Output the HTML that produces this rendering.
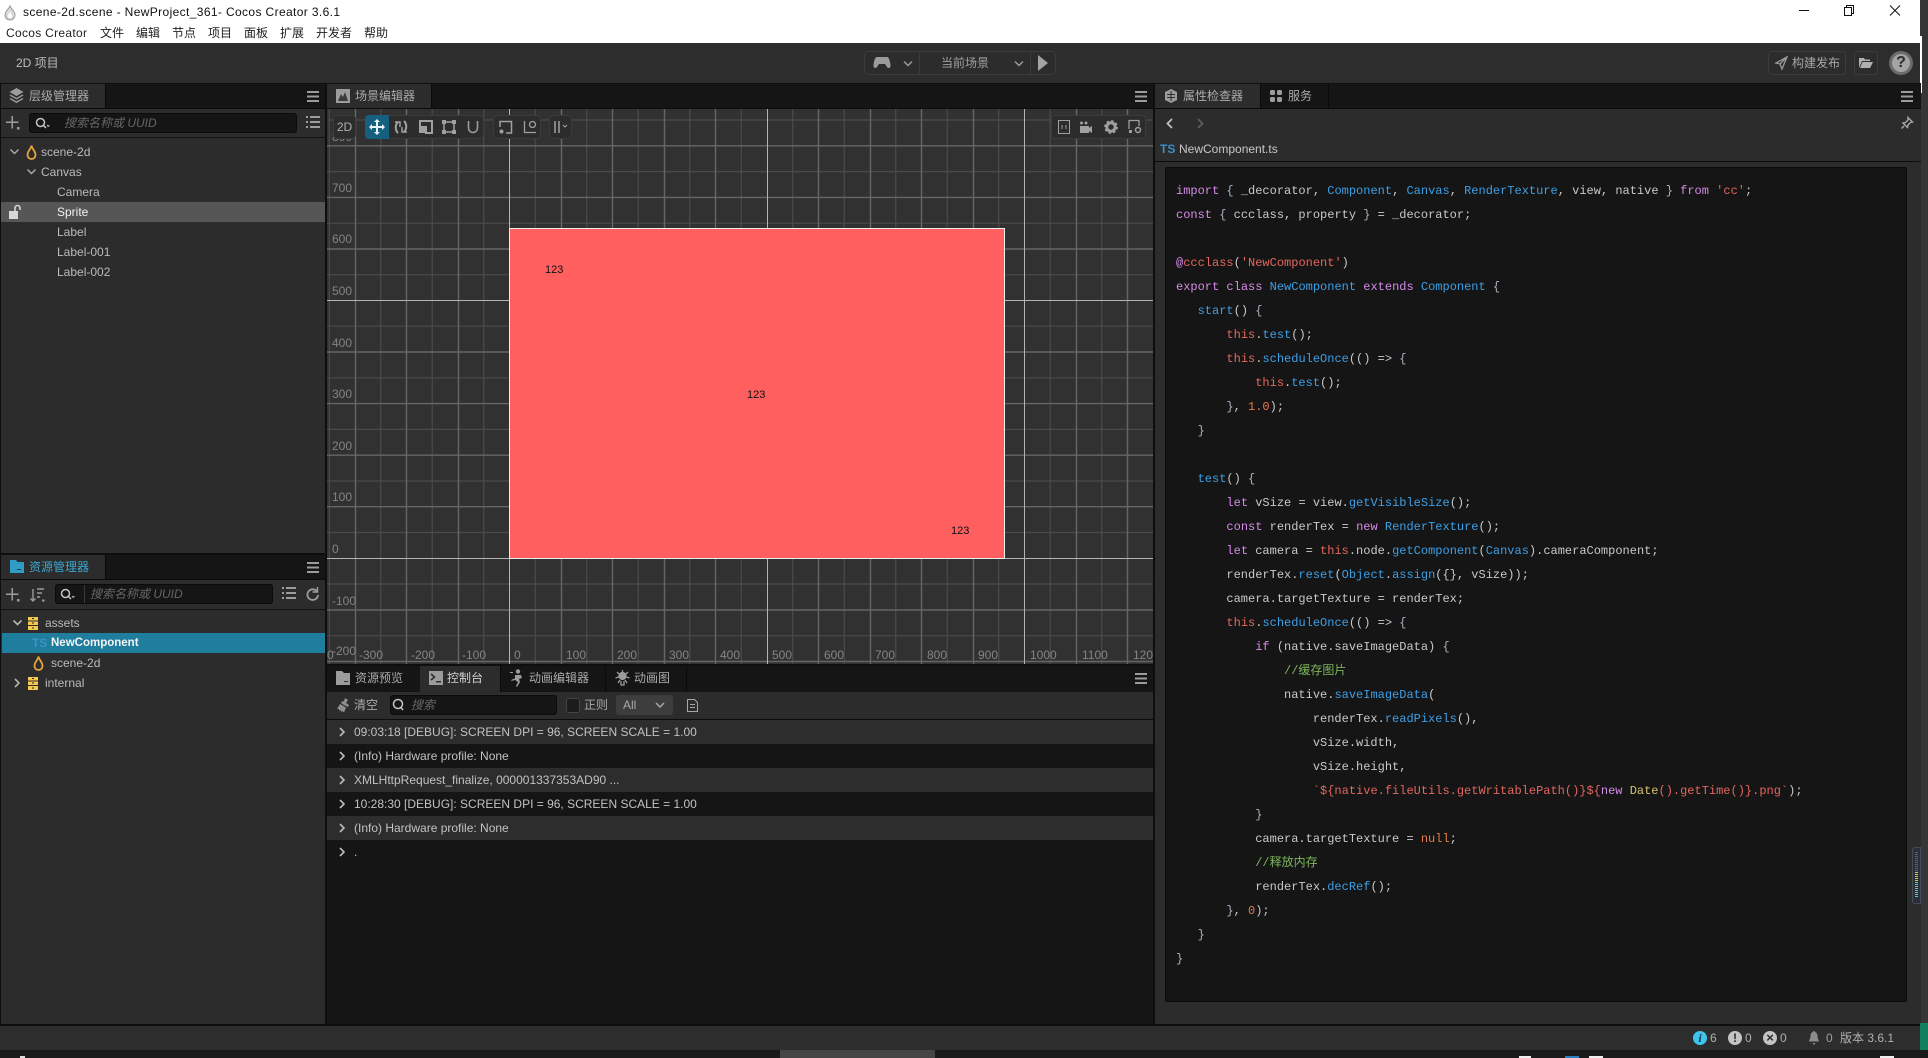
<!DOCTYPE html>
<html lang="zh"><head><meta charset="utf-8"><title>scene-2d.scene - NewProject_361- Cocos Creator 3.6.1</title>
<style>
html,body{margin:0;padding:0;width:1928px;height:1058px;overflow:hidden;background:#363636}
body{position:relative;font:12px/20px "Liberation Sans","Noto Sans CJK SC",sans-serif;color:#b4b4b4}
.a,.t{position:absolute;white-space:pre}
.t{height:20px;line-height:20px}
.tab{font-size:12px;color:#ababab}
svg{position:absolute;overflow:visible}
.bx{position:absolute;box-sizing:border-box;background:#2c2c2c;border:1px solid #3b3b3b;border-radius:4px}
.in{position:absolute;box-sizing:border-box;background:#151515;border:1px solid #0b0b0b;border-radius:3px}
.ph{font-style:italic;color:#666}
.ro{position:absolute;left:327px;width:826px;height:24px}
.ro .t{left:27px;top:2px;color:#c2c2c2}
.ro svg{left:12px;top:7px}
.ruler{color:#848484}
#code{position:absolute;left:1176px;top:179px;margin:0;font:12px/24px "Liberation Mono","Noto Sans CJK SC",monospace;color:#c9c9c9;white-space:pre}
#code i{font-style:normal}
.k{color:#d58be8}.b{color:#3d9fe6}.r{color:#e4665f}.o{color:#e67a48}.g{color:#7cb75a}.y{color:#d6c36b}.p{color:#a9b4c0}
</style></head><body>

<!-- title bar -->
<div class="a" style="left:0;top:0;width:1920px;height:43px;background:#fff"></div>
<svg style="left:3px;top:5px" width="14" height="16" viewBox="0 0 14 16"><path d="M7 1C8 4 12 6 12 10a5 5 0 0 1-10 0C2 6 6 4 7 1z" fill="#d8d8d8" stroke="#9a9a9a"/><path d="M7 5C7 8 9 9 9 11a2 2 0 0 1-4 0c0-2 2-3 2-6z" fill="#fff"/></svg>
<div class="t" style="left:23px;top:2px;color:#111;letter-spacing:.37px">scene-2d.scene - NewProject_361- Cocos Creator 3.6.1</div>
<div class="t" style="left:6px;top:23px;color:#222;letter-spacing:.3px">Cocos Creator</div>
<div class="t" style="left:100px;top:23px;color:#222">文件</div>
<div class="t" style="left:136px;top:23px;color:#222">编辑</div>
<div class="t" style="left:172px;top:23px;color:#222">节点</div>
<div class="t" style="left:208px;top:23px;color:#222">项目</div>
<div class="t" style="left:244px;top:23px;color:#222">面板</div>
<div class="t" style="left:280px;top:23px;color:#222">扩展</div>
<div class="t" style="left:316px;top:23px;color:#222">开发者</div>
<div class="t" style="left:364px;top:23px;color:#222">帮助</div>
<svg style="left:1795px;top:2px" width="120" height="18" viewBox="1795 2 120 18" fill="none" stroke="#111"><path d="M1799 10.500h10"/><path d="M1844.500 7.500h7v8h-7zM1846.500 7.500v-2h7v8h-2"/><path d="M1890 5.500l10 10M1900 5.500l-10 10"/></svg>

<!-- top toolbar -->
<div class="a" style="left:0;top:43px;width:1921px;height:40px;background:#2d2d2d"></div>
<div class="a" style="left:1920px;top:36px;width:2px;height:57px;background:#fff"></div>
<div class="t" style="left:16px;top:53px;color:#bdbdbd">2D 项目</div>
<div class="bx" style="left:864px;top:51px;width:192px;height:24px"></div>
<div class="a" style="left:919px;top:52px;width:1px;height:22px;background:#3b3b3b"></div>
<div class="a" style="left:1030px;top:52px;width:1px;height:22px;background:#3b3b3b"></div>
<svg style="left:873px;top:56px" width="18" height="14" viewBox="0 0 18 14"><path d="M4 1h10c2 0 3 4 3.500 8 .3 3-2 4-3.500 2l-2-3H6l-2 3C2.500 13 .2 12 .5 9 1 5 2 1 4 1z" fill="#9a9a9a"/></svg>
<svg style="left:903px;top:60px" width="120" height="8" viewBox="0 0 120 8" fill="none" stroke="#9a9a9a" stroke-width="1.500"><path d="M1 1.500l4 4 4-4M112 1.500l4 4 4-4"/></svg>
<div class="t" style="left:941px;top:53px;color:#a0a0a0">当前场景</div>
<svg style="left:1037px;top:55px" width="12" height="16" viewBox="0 0 12 16"><path d="M1 0l10 8-10 8z" fill="#a3a3a3"/></svg>
<div class="bx" style="left:1768px;top:51px;width:78px;height:24px"></div>
<svg style="left:1775px;top:56px" width="13" height="14" viewBox="0 0 13 14" fill="none" stroke="#9a9a9a" stroke-width="1.300"><path d="M12 1L1 7l4 1 2 5zM12 1L5 8"/></svg>
<div class="t" style="left:1792px;top:53px;color:#a6a6a6">构建发布</div>
<div class="bx" style="left:1854px;top:51px;width:24px;height:24px"></div>
<svg style="left:1859px;top:57px" width="14" height="12" viewBox="0 0 14 12"><path d="M0 1h5l1 1.500h5V4H3L0 11zM3.500 5H14l-3 6H1z" fill="#b0b0b0"/></svg>
<div class="a" style="left:1889px;top:51px;width:24px;height:24px;border-radius:50%;background:#6b6b6b"></div>
<div class="a" style="left:1892px;top:54px;width:18px;height:18px;border-radius:50%;background:#a4a4a4;color:#2b2b2b;font:bold 16px/18px 'Liberation Sans';text-align:center">?</div>

<!-- dark seams -->
<div class="a" style="left:0;top:83px;width:1921px;height:943px;background:#0e0e0e"></div>

<!-- hierarchy panel -->
<div class="a" style="left:1px;top:84px;width:324px;height:469px;background:#2c2c2c"></div>
<div class="a" style="left:1px;top:84px;width:324px;height:24px;background:#151515"></div>
<div class="a" style="left:1px;top:84px;width:104px;height:24px;background:#2c2c2c"></div>
<div class="a" style="left:105px;top:84px;width:1px;height:24px;background:#0a0a0a"></div>
<div class="a" style="left:1px;top:108px;width:324px;height:1px;background:#0a0a0a"></div>
<svg style="left:9px;top:88px" width="15" height="15" viewBox="0 0 15 15" fill="#9c9c9c"><path d="M7.500 0l7 4-7 4-7-4z"/><path d="M1.500 6.500l6 3.400 6-3.400 1 1-7 4-7-4zM1.500 10l6 3.400 6-3.400 1 1-7 4-7-4z"/></svg>
<div class="t tab" style="left:29px;top:86px">层级管理器</div>
<svg style="left:307px;top:91px" width="12" height="11" viewBox="0 0 12 11" fill="#9c9c9c"><path d="M0 0h12v2H0zM0 4.500h12v2H0zM0 9h12v2H0z"/></svg>
<svg style="left:6px;top:116px" width="14" height="14" viewBox="0 0 14 14" fill="#9c9c9c"><path d="M5.500 0h1.500v5.500h5.500V7H7v5.500H5.500V7H0V5.500h5.500zM11 11h2.500v2.500H11z"/></svg>
<div class="in" style="left:29px;top:113px;width:268px;height:20px"></div>
<svg style="left:35px;top:117px" width="15" height="13" viewBox="0 0 15 13" fill="none" stroke="#c4c4c4" stroke-width="1.500"><circle cx="5.500" cy="5.500" r="4"/><path d="M8.500 8.500L11 11"/><path d="M12 8l1.200 1.500L14.400 8" stroke-width="1"/></svg>
<div class="t ph" style="left:64px;top:113px">搜索名称或 UUID</div>
<svg style="left:306px;top:116px" width="14" height="13" viewBox="0 0 14 13" fill="#9c9c9c"><path d="M0 0h2v2H0zM4 0h10v2H4zM0 5h2v2H0zM4 5h10v2H4zM0 10h2v2H0zM4 10h10v2H4z"/></svg>
<div class="a" style="left:1px;top:137px;width:324px;height:1px;background:#111"></div>
<svg style="left:10px;top:149px" width="25" height="7" viewBox="0 0 25 7" fill="none" stroke="#a8a8a8" stroke-width="1.500"><path d="M0.500 0.500l4 4 4-4"/></svg>
<svg style="left:26px;top:144px" width="11" height="17" viewBox="0 0 11 17" fill="none" stroke="#e6a23c" stroke-width="1.800"><path d="M5.500 1.500C6 5 9.500 7 9.500 11a4 4 0 0 1-8 0c0-4 3.500-6 4-9.500z"/></svg>
<div class="t" style="left:41px;top:142px;color:#bbb">scene-2d</div>
<svg style="left:27px;top:169px" width="9" height="7" viewBox="0 0 9 7" fill="none" stroke="#a8a8a8" stroke-width="1.500"><path d="M0.500 0.500l4 4 4-4"/></svg>
<div class="t" style="left:41px;top:162px;color:#bbb">Canvas</div>
<div class="t" style="left:57px;top:182px;color:#bbb">Camera</div>
<div class="a" style="left:1px;top:202px;width:324px;height:20px;background:#565656"></div>
<svg style="left:8px;top:205px" width="14" height="14" viewBox="0 0 14 14"><path d="M1 6h9v8H1z" fill="#d8d8d8"/><path d="M7 6V3a2.500 2.500 0 0 1 5 0v2" fill="none" stroke="#d8d8d8" stroke-width="1.500"/></svg>
<div class="t" style="left:57px;top:202px;color:#f2f2f2">Sprite</div>
<div class="t" style="left:57px;top:222px;color:#bbb">Label</div>
<div class="t" style="left:57px;top:242px;color:#bbb">Label-001</div>
<div class="t" style="left:57px;top:262px;color:#bbb">Label-002</div>

<!-- scene editor -->
<div class="a" style="left:327px;top:84px;width:826px;height:24px;background:#151515"></div>
<div class="a" style="left:327px;top:84px;width:104px;height:24px;background:#2c2c2c"></div>
<div class="a" style="left:431px;top:84px;width:1px;height:24px;background:#0a0a0a"></div>
<svg style="left:336px;top:89px" width="14" height="14" viewBox="0 0 14 14"><path d="M0 0h14v14H0z" fill="#9c9c9c"/><path d="M2 12l3-7 2 3 2-5 3 9z" fill="#3b3b3b"/></svg>
<div class="t tab" style="left:355px;top:86px">场景编辑器</div>
<svg style="left:1135px;top:91px" width="12" height="11" viewBox="0 0 12 11" fill="#9c9c9c"><path d="M0 0h12v2H0zM0 4.500h12v2H0zM0 9h12v2H0z"/></svg>

<div class="a" style="left:327px;top:109px;width:826px;height:555px;background:#313131;overflow:hidden">
<svg style="left:0;top:0" width="826" height="555" viewBox="327 109 826 555" fill="none">
<path stroke="#4b4b4b" stroke-width="1.200" d="M329.250 109V664M380.750 109V664M432.250 109V664M483.750 109V664M535.250 109V664M586.750 109V664M638.250 109V664M689.750 109V664M741.250 109V664M792.750 109V664M844.250 109V664M895.750 109V664M947.250 109V664M998.750 109V664M1050.250 109V664M1101.750 109V664M327 120H1153M327 171.600H1153M327 223.200H1153M327 274.700H1153M327 326.200H1153M327 377.800H1153M327 429.400H1153M327 481H1153M327 532.500H1153M327 584H1153M327 635.800H1153"/>
<path stroke="#666" stroke-width="1.400" d="M355.500 109V664M406.500 109V664M458.500 109V664M561.500 109V664M612.500 109V664M664.500 109V664M715.500 109V664M818.500 109V664M870.500 109V664M921.500 109V664M973.500 109V664M1076.500 109V664M1127.500 109V664M327 145.800H1153M327 197.400H1153M327 249H1153M327 352H1153M327 403.600H1153M327 455.200H1153M327 506.700H1153M327 610H1153M327 661.500H1153"/>
<path stroke="#b4b4b4" d="M509.500 109V664M767.500 109V664M1024.500 109V664M327 300.500H1153M327 558.500H1153"/>
</svg>
<div class="a" style="left:182px;top:119px;width:496px;height:331px;box-sizing:border-box;background:#ff5f5f;border:1px solid #eee"></div>
<div class="t" style="left:218px;top:151px;font-size:11px;color:#111">123</div>
<div class="t" style="left:420px;top:276px;font-size:11px;color:#111">123</div>
<div class="t" style="left:624px;top:412px;font-size:11px;color:#111">123</div>
<div class="ruler">
<div class="t" style="left:5px;top:18px">800</div>
<div class="t" style="left:5px;top:69px">700</div>
<div class="t" style="left:5px;top:120px">600</div>
<div class="t" style="left:5px;top:172px">500</div>
<div class="t" style="left:5px;top:224px">400</div>
<div class="t" style="left:5px;top:275px">300</div>
<div class="t" style="left:5px;top:327px">200</div>
<div class="t" style="left:5px;top:378px">100</div>
<div class="t" style="left:5px;top:430px">0</div>
<div class="t" style="left:5px;top:482px">-100</div>
<div class="t" style="left:5px;top:532px">-200</div>
<div class="t" style="left:0;top:536px">0</div>
<div class="t" style="left:32px;top:536px">-300</div>
<div class="t" style="left:84px;top:536px">-200</div>
<div class="t" style="left:135px;top:536px">-100</div>
<div class="t" style="left:187px;top:536px">0</div>
<div class="t" style="left:239px;top:536px">100</div>
<div class="t" style="left:290px;top:536px">200</div>
<div class="t" style="left:342px;top:536px">300</div>
<div class="t" style="left:393px;top:536px">400</div>
<div class="t" style="left:445px;top:536px">500</div>
<div class="t" style="left:497px;top:536px">600</div>
<div class="t" style="left:548px;top:536px">700</div>
<div class="t" style="left:600px;top:536px">800</div>
<div class="t" style="left:651px;top:536px">900</div>
<div class="t" style="left:703px;top:536px">1000</div>
<div class="t" style="left:755px;top:536px">1100</div>
<div class="t" style="left:806px;top:536px">120</div>
</div>
</div>

<!-- scene tool groups -->
<div class="bx" style="left:333px;top:115px;width:23px;height:24px;text-align:center;line-height:22px;color:#b0b0b0">2D</div>
<div class="bx" style="left:365px;top:115px;width:119px;height:24px"></div>
<div class="a" style="left:365px;top:115px;width:24px;height:24px;background:#15607e;border-radius:4px 0 0 4px"></div>
<svg style="left:369px;top:119px" width="16" height="16" viewBox="0 0 16 16" fill="#e8f2f6"><path d="M8 0l3 3H9v4h4V5l3 3-3 3V9H9v4h2l-3 3-3-3h2V9H3v2L0 8l3-3v2h4V3H5z"/></svg>
<svg style="left:393px;top:119px" width="16" height="16" viewBox="0 0 16 16" fill="none" stroke="#a0a0a0" stroke-width="2"><path d="M5 14C2 11 2 6 5 3M11 2c3 3 3 8 0 11"/><path d="M2 3h5v5M14 13H9V8" stroke-width="1.500"/></svg>
<svg style="left:418px;top:120px" width="15" height="14" viewBox="0 0 15 14"><path d="M2 1h12v12H8V7H2z" fill="none" stroke="#a0a0a0" stroke-width="2"/><path d="M1 7h6v6H1z" fill="#a0a0a0"/></svg>
<svg style="left:442px;top:120px" width="14" height="14" viewBox="0 0 14 14"><path d="M2 2h10v10H2z" fill="none" stroke="#a0a0a0" stroke-width="1.500"/><path d="M0 0h4v4H0zM10 0h4v4h-4zM0 10h4v4H0zM10 10h4v4h-4z" fill="#a0a0a0"/></svg>
<svg style="left:467px;top:120px" width="12" height="14" viewBox="0 0 12 14" fill="none" stroke="#a0a0a0" stroke-width="1.500"><path d="M1.500 1v7a4.500 4.500 0 0 0 9 0V1"/></svg>
<div class="bx" style="left:493px;top:115px;width:48px;height:24px"></div>
<svg style="left:499px;top:120px" width="14" height="14" viewBox="0 0 14 14" fill="none" stroke="#a0a0a0" stroke-width="1.500"><path d="M1 7V1.500h11.500V13H7"/><circle cx="2.500" cy="11.500" r="2" fill="#a0a0a0" stroke="none"/></svg>
<svg style="left:523px;top:120px" width="14" height="14" viewBox="0 0 14 14" fill="none" stroke="#a0a0a0" stroke-width="1.300"><path d="M1.500 1v11.500H13"/><circle cx="9.500" cy="4.500" r="3"/></svg>
<div class="bx" style="left:549px;top:115px;width:23px;height:24px"></div>
<svg style="left:554px;top:121px" width="14" height="12" viewBox="0 0 14 12" fill="none" stroke="#a0a0a0" stroke-width="1.500"><path d="M1 0v12M5 0v12"/><path d="M9 4l2 2 2-2" stroke-width="1"/></svg>
<div class="bx" style="left:1051px;top:115px;width:95px;height:24px"></div>
<svg style="left:1058px;top:120px" width="84" height="14" viewBox="0 0 84 14"><path d="M.5.500h11v13H.5z" fill="none" stroke="#a0a0a0"/><path d="M4 5v4M8 5v4" stroke="#a0a0a0"/><path d="M22 6h9v7h-9zM31 8l3-2v7l-3-2z" fill="#a0a0a0"/><circle cx="23.500" cy="3" r="1.500" fill="#a0a0a0"/><circle cx="28" cy="3" r="1.500" fill="#a0a0a0"/><circle cx="53" cy="7" r="4.200" fill="none" stroke="#a0a0a0" stroke-width="3"/><circle cx="53" cy="7" r="6" fill="none" stroke="#a0a0a0" stroke-width="1.800" stroke-dasharray="2.400 2.300"/><path d="M71 9V.500h10V6" fill="none" stroke="#a0a0a0" stroke-width="1.300"/><path d="M71 10h3v3h-3z" fill="#a0a0a0"/><circle cx="80" cy="10" r="2.500" fill="none" stroke="#a0a0a0" stroke-width="1.500"/></svg>

<!-- console panel -->
<div class="a" style="left:327px;top:666px;width:826px;height:358px;background:#151515"></div>
<div class="a" style="left:420px;top:666px;width:80px;height:26px;background:#2c2c2c"></div>
<div class="a" style="left:500px;top:666px;width:1px;height:26px;background:#0a0a0a"></div>
<div class="a" style="left:605px;top:666px;width:1px;height:26px;background:#0a0a0a"></div>
<div class="a" style="left:686px;top:666px;width:1px;height:26px;background:#0a0a0a"></div>
<svg style="left:336px;top:671px" width="14" height="14" viewBox="0 0 14 14"><path d="M0 0h6l2 2h6v12H0z" fill="#9c9c9c"/><path d="M8 10h4v1H8z" fill="#333"/></svg>
<div class="t tab" style="left:355px;top:668px">资源预览</div>
<svg style="left:429px;top:671px" width="14" height="14" viewBox="0 0 14 14"><path d="M0 0h14v14H0z" fill="#9c9c9c"/><path d="M2 3l3.500 3L2 9" fill="none" stroke="#2c2c2c" stroke-width="1.500"/><path d="M7 10h5v1.500H7z" fill="#2c2c2c"/></svg>
<div class="t" style="left:447px;top:668px;color:#d0d0d0">控制台</div>
<svg style="left:510px;top:669px" width="13" height="18" viewBox="0 0 13 18" fill="#9c9c9c"><circle cx="8" cy="2.500" r="2.200"/><path d="M5 6h6l1 3-3 1 1 3-3 5-1-1 2-4-3-2-4 1 1-1.500 3-1zM0 3h3v1H0z"/></svg>
<div class="t tab" style="left:529px;top:668px">动画编辑器</div>
<svg style="left:615px;top:669px" width="15" height="17" viewBox="0 0 15 17" fill="none" stroke="#9c9c9c" stroke-width="1.300"><circle cx="7.500" cy="7" r="3.500" fill="#9c9c9c"/><path d="M7.500 1v2M2 3l2 2M13 3l-2 2M0.500 9l3-1M14.500 9l-3-1M3 14l2-3M12 14l-2-3M6 12v4h3v-4"/></svg>
<div class="t tab" style="left:634px;top:668px">动画图</div>
<svg style="left:1135px;top:673px" width="12" height="11" viewBox="0 0 12 11" fill="#9c9c9c"><path d="M0 0h12v2H0zM0 4.500h12v2H0zM0 9h12v2H0z"/></svg>
<div class="a" style="left:327px;top:692px;width:826px;height:27px;background:#2c2c2c"></div>
<svg style="left:337px;top:698px" width="13" height="15" viewBox="0 0 13 15" fill="#8e8e8e"><path d="M8 0l3 2-2 3 3 2-1 2-6-3-1-2 3-1zM3 6l6 3.500-2 5-1.500-1.500-1 1-1-2-1 1-.5-2L0 11z"/></svg>
<div class="t" style="left:354px;top:695px;color:#a8a8a8">清空</div>
<div class="in" style="left:390px;top:695px;width:167px;height:20px"></div>
<svg style="left:392px;top:698px" width="13" height="14" viewBox="0 0 13 14" fill="none" stroke="#c4c4c4" stroke-width="1.500"><circle cx="6" cy="6" r="4.500"/><path d="M9 9.500l2 2.500"/></svg>
<div class="t ph" style="left:411px;top:695px">搜索</div>
<div class="in" style="left:566px;top:698px;width:14px;height:15px;background:#1c1c1c;border-color:#444"></div>
<div class="t" style="left:584px;top:695px;color:#a8a8a8">正则</div>
<div class="a" style="left:616px;top:695px;width:57px;height:20px;background:#3d3d3d;border-radius:3px"></div>
<div class="t" style="left:623px;top:695px;color:#a8a8a8">All</div>
<svg style="left:655px;top:702px" width="10" height="6" viewBox="0 0 10 6" fill="none" stroke="#a8a8a8" stroke-width="1.500"><path d="M1 1l4 4 4-4"/></svg>
<svg style="left:687px;top:699px" width="11" height="13" viewBox="0 0 11 13" fill="none" stroke="#a8a8a8"><path d="M.5.500h7l3 3v9H.500zM3 5.500h5M3 8.500h5"/></svg>
<div class="a" style="left:327px;top:719px;width:826px;height:1px;background:#0c0c0c"></div>

<div class="ro" style="top:720px;background:#2d2d2d"><svg width="7" height="10" viewBox="0 0 7 10" fill="none" stroke="#bbb" stroke-width="1.600"><path d="M1 1l4 4-4 4"/></svg><div class="t">09:03:18 [DEBUG]: SCREEN DPI = 96, SCREEN SCALE = 1.00</div></div>
<div class="ro" style="top:744px;background:#151515"><svg width="7" height="10" viewBox="0 0 7 10" fill="none" stroke="#bbb" stroke-width="1.600"><path d="M1 1l4 4-4 4"/></svg><div class="t">(Info) Hardware profile: None</div></div>
<div class="ro" style="top:768px;background:#2d2d2d"><svg width="7" height="10" viewBox="0 0 7 10" fill="none" stroke="#bbb" stroke-width="1.600"><path d="M1 1l4 4-4 4"/></svg><div class="t">XMLHttpRequest_finalize, 000001337353AD90 ...</div></div>
<div class="ro" style="top:792px;background:#151515"><svg width="7" height="10" viewBox="0 0 7 10" fill="none" stroke="#bbb" stroke-width="1.600"><path d="M1 1l4 4-4 4"/></svg><div class="t">10:28:30 [DEBUG]: SCREEN DPI = 96, SCREEN SCALE = 1.00</div></div>
<div class="ro" style="top:816px;background:#2d2d2d"><svg width="7" height="10" viewBox="0 0 7 10" fill="none" stroke="#bbb" stroke-width="1.600"><path d="M1 1l4 4-4 4"/></svg><div class="t">(Info) Hardware profile: None</div></div>
<div class="ro" style="top:840px;background:#151515"><svg width="7" height="10" viewBox="0 0 7 10" fill="none" stroke="#bbb" stroke-width="1.600"><path d="M1 1l4 4-4 4"/></svg><div class="t">.</div></div>

<!-- assets panel -->
<div class="a" style="left:1px;top:555px;width:324px;height:469px;background:#2c2c2c"></div>
<div class="a" style="left:1px;top:555px;width:324px;height:24px;background:#151515"></div>
<div class="a" style="left:1px;top:555px;width:104px;height:24px;background:#2c2c2c"></div>
<div class="a" style="left:105px;top:555px;width:1px;height:24px;background:#0a0a0a"></div>
<div class="a" style="left:1px;top:579px;width:324px;height:1px;background:#0a0a0a"></div>
<svg style="left:10px;top:560px" width="14" height="13" viewBox="0 0 14 13"><path d="M0 0h6l1.500 2H14v11H0z" fill="#2f9cc5"/><path d="M7 9h4v1H7z" fill="#153a48"/></svg>
<div class="t" style="left:29px;top:557px;color:#3aa6d0">资源管理器</div>
<svg style="left:307px;top:562px" width="12" height="11" viewBox="0 0 12 11" fill="#9c9c9c"><path d="M0 0h12v2H0zM0 4.500h12v2H0zM0 9h12v2H0z"/></svg>
<svg style="left:6px;top:588px" width="14" height="14" viewBox="0 0 14 14" fill="#9c9c9c"><path d="M5.500 0h1.500v5.500h5.500V7H7v5.500H5.500V7H0V5.500h5.500zM11 11h2.500v2.500H11z"/></svg>
<svg style="left:30px;top:588px" width="15" height="14" viewBox="0 0 15 14" fill="none" stroke="#9c9c9c" stroke-width="1.400"><path d="M3 1v12M.5 10.500L3 13l2.500-2.500M7 1h7M7 5h5M7 9h3"/><path d="M12 11.500h2.500v2H12z" fill="#9c9c9c" stroke="none"/></svg>
<div class="in" style="left:55px;top:584px;width:218px;height:20px"></div>
<div class="a" style="left:84px;top:585px;width:1px;height:18px;background:#3a3a3a"></div>
<svg style="left:60px;top:588px" width="15" height="13" viewBox="0 0 15 13" fill="none" stroke="#c4c4c4" stroke-width="1.500"><circle cx="5.500" cy="5.500" r="4"/><path d="M8.500 8.500L11 11"/><path d="M12 8l1.200 1.500L14.400 8" stroke-width="1"/></svg>
<div class="t ph" style="left:90px;top:584px">搜索名称或 UUID</div>
<svg style="left:282px;top:587px" width="14" height="13" viewBox="0 0 14 13" fill="#9c9c9c"><path d="M0 0h2v2H0zM4 0h10v2H4zM0 5h2v2H0zM4 5h10v2H4zM0 10h2v2H0zM4 10h10v2H4z"/></svg>
<svg style="left:306px;top:587px" width="13" height="14" viewBox="0 0 13 14" fill="none" stroke="#9c9c9c" stroke-width="1.800"><path d="M11 4.500A5.300 5.300 0 1 0 12 8"/><path d="M11.500 0v5h-5" stroke-width="1.400"/></svg>
<div class="a" style="left:1px;top:609px;width:324px;height:1px;background:#111"></div>
<svg style="left:13px;top:620px" width="9" height="7" viewBox="0 0 9 7" fill="none" stroke="#b4b4b4" stroke-width="1.600"><path d="M.5.500l4 4 4-4"/></svg>
<svg style="left:28px;top:617px" width="10" height="13" viewBox="0 0 10 13" fill="#f6c94f"><path d="M0 0h10v3.500H0zM0 4.500h10V8H0zM0 9h10v4H0z"/><path d="M4 1h2v1H4zM4 5.500h2v1H4zM4 10.500h2v1H4z" fill="#222"/></svg>
<div class="t" style="left:45px;top:613px;color:#bbb">assets</div>
<div class="a" style="left:2px;top:633px;width:323px;height:20px;background:#1f7d9e"></div>
<div class="t" style="left:32px;top:633px;font-weight:bold;color:#3d93c6">TS</div>
<div class="t" style="left:51px;top:633px;color:#f4f4f4;font-weight:bold;font-size:11.500px">NewComponent</div>
<svg style="left:33px;top:655px" width="11" height="17" viewBox="0 0 11 17" fill="none" stroke="#e6a23c" stroke-width="1.800"><path d="M5.500 1.500C6 5 9.500 7 9.500 11a4 4 0 0 1-8 0c0-4 3.500-6 4-9.500z"/></svg>
<div class="t" style="left:51px;top:653px;color:#bbb">scene-2d</div>
<svg style="left:14px;top:678px" width="7" height="10" viewBox="0 0 7 10" fill="none" stroke="#b4b4b4" stroke-width="1.600"><path d="M1 1l4 4-4 4"/></svg>
<svg style="left:28px;top:677px" width="10" height="13" viewBox="0 0 10 13" fill="#f6c94f"><path d="M0 0h10v3.500H0zM0 4.500h10V8H0zM0 9h10v4H0z"/><path d="M4 1h2v1H4zM4 5.500h2v1H4zM4 10.500h2v1H4z" fill="#222"/></svg>
<div class="t" style="left:45px;top:673px;color:#bbb">internal</div>

<!-- inspector -->
<div class="a" style="left:1155px;top:84px;width:766px;height:940px;background:#2c2c2c"></div>
<div class="a" style="left:1155px;top:84px;width:766px;height:24px;background:#151515"></div>
<div class="a" style="left:1155px;top:84px;width:105px;height:24px;background:#2c2c2c"></div>
<div class="a" style="left:1260px;top:84px;width:1px;height:24px;background:#0a0a0a"></div>
<div class="a" style="left:1328px;top:84px;width:1px;height:24px;background:#0a0a0a"></div>
<div class="a" style="left:1155px;top:108px;width:766px;height:1px;background:#0a0a0a"></div>
<svg style="left:1165px;top:89px" width="12" height="14" viewBox="0 0 12 14"><path d="M6 0l6 3v8l-6 3-6-3V3z" fill="#9c9c9c"/><path d="M2 5h8v1H2zM2 8h8v1H2zM5.500 2h1v10h-1z" fill="#2c2c2c"/></svg>
<div class="t tab" style="left:1183px;top:86px">属性检查器</div>
<svg style="left:1270px;top:90px" width="12" height="12" viewBox="0 0 12 12" fill="#9c9c9c"><rect width="5" height="5" rx="1.500"/><rect x="7" width="5" height="5" rx="1.500"/><rect y="7" width="5" height="5" rx="1.500"/><rect x="7" y="7" width="5" height="5" rx="1.500"/></svg>
<div class="t tab" style="left:1288px;top:86px">服务</div>
<svg style="left:1901px;top:91px" width="12" height="11" viewBox="0 0 12 11" fill="#9c9c9c"><path d="M0 0h12v2H0zM0 4.500h12v2H0zM0 9h12v2H0z"/></svg>
<svg style="left:1166px;top:118px" width="7" height="11" viewBox="0 0 7 11" fill="none" stroke="#c0c0c0" stroke-width="1.800"><path d="M6 1L1.500 5.500 6 10"/></svg>
<svg style="left:1197px;top:118px" width="7" height="11" viewBox="0 0 7 11" fill="none" stroke="#5c5c5c" stroke-width="1.800"><path d="M1 1l4.500 4.500L1 10"/></svg>
<svg style="left:1901px;top:116px" width="13" height="13" viewBox="0 0 13 13" fill="none" stroke="#a8a8a8" stroke-width="1.400"><path d="M7 1.500l4.500 4.500-2 .5-2.500 2.500-.5 2.500-4.500-4.500 2.500-.5L7 4z"/><path d="M3 10L.5 12.500"/></svg>
<div class="t" style="left:1160px;top:139px;font-weight:bold;color:#3b8fc9">TS</div>
<div class="t" style="left:1179px;top:139px;color:#c8c8c8">NewComponent.ts</div>
<div class="a" style="left:1155px;top:161px;width:766px;height:1px;background:#0e0e0e"></div>
<div class="a" style="left:1165px;top:167px;width:742px;height:835px;background:#151515;border-radius:2px;box-sizing:border-box;border:1px solid #0c0c0c"></div>
<pre id="code"><i class="k">import</i> <i class="p">{</i> _decorator, <i class="b">Component</i>, <i class="b">Canvas</i>, <i class="b">RenderTexture</i>, view, native <i class="p">}</i> <i class="k">from</i> <i class="r">'cc'</i>;
<i class="k">const</i> <i class="p">{</i> ccclass, property <i class="p">}</i> = _decorator;

<i class="k">@</i><i class="r">ccclass</i>(<i class="r">'NewComponent'</i>)
<i class="k">export</i> <i class="k">class</i> <i class="b">NewComponent</i> <i class="k">extends</i> <i class="b">Component</i> <i class="p">{</i>
   <i class="b">start</i>() <i class="p">{</i>
       <i class="r">this</i>.<i class="b">test</i>();
       <i class="r">this</i>.<i class="b">scheduleOnce</i>(() =&gt; <i class="p">{</i>
           <i class="r">this</i>.<i class="b">test</i>();
       <i class="p">}</i>, <i class="o">1.0</i>);
   <i class="p">}</i>

   <i class="b">test</i>() <i class="p">{</i>
       <i class="k">let</i> vSize = view.<i class="b">getVisibleSize</i>();
       <i class="k">const</i> renderTex = <i class="k">new</i> <i class="b">RenderTexture</i>();
       <i class="k">let</i> camera = <i class="r">this</i>.node.<i class="b">getComponent</i>(<i class="b">Canvas</i>).cameraComponent;
       renderTex.<i class="b">reset</i>(<i class="b">Object</i>.<i class="b">assign</i>({}, vSize));
       camera.targetTexture = renderTex;
       <i class="r">this</i>.<i class="b">scheduleOnce</i>(() =&gt; <i class="p">{</i>
           <i class="k">if</i> (native.saveImageData) <i class="p">{</i>
               <i class="g">//缓存图片</i>
               native.<i class="b">saveImageData</i>(
                   renderTex.<i class="b">readPixels</i>(),
                   vSize.width,
                   vSize.height,
                   <i class="r">`${native.fileUtils.getWritablePath()}${</i><i class="k">new</i> <i class="y">Date</i><i class="r">().getTime()}.png`</i>);
           <i class="p">}</i>
           camera.targetTexture = <i class="o">null</i>;
           <i class="g">//释放内存</i>
           renderTex.<i class="b">decRef</i>();
       <i class="p">}</i>, <i class="o">0</i>);
   <i class="p">}</i>
<i class="p">}</i></pre>
<div class="a" style="left:1912px;top:847px;width:9px;height:57px;box-sizing:border-box;background:#2b3038;border:1px solid #444c58;border-radius:3px 0 0 3px"></div>
<div class="a" style="left:1915px;top:852px;width:3px;height:22px;background:repeating-linear-gradient(#5a6270 0 1px,#2b3038 1px 2px)"></div>
<div class="a" style="left:1915px;top:872px;width:3px;height:10px;background:repeating-linear-gradient(#c8c85a 0 1px,#2b3038 1px 2px)"></div>
<div class="a" style="left:1915px;top:882px;width:3px;height:16px;background:repeating-linear-gradient(#5ac8b4 0 1px,#2b3038 1px 2px)"></div>

<!-- status bar -->
<div class="a" style="left:0;top:1026px;width:1920px;height:24px;background:#2d2d2d"></div>
<div class="a" style="left:1920px;top:1023px;width:8px;height:27px;background:#127f5e"></div>
<div class="a" style="left:0;top:1050px;width:1928px;height:8px;background:#1a1a1a"></div>
<div class="a" style="left:780px;top:1050px;width:155px;height:8px;background:#454545"></div>
<div class="a" style="left:20px;top:1056px;width:5px;height:2px;background:#ddd"></div>
<div class="a" style="left:1519px;top:1056px;width:12px;height:2px;background:#eee"></div>
<div class="a" style="left:1565px;top:1056px;width:14px;height:2px;background:#2a7fc0"></div>
<div class="a" style="left:1589px;top:1056px;width:14px;height:2px;background:#eee"></div>
<div class="a" style="left:1880px;top:1056px;width:14px;height:2px;background:#eee"></div>
<div class="a" style="left:1693px;top:1031px;width:14px;height:14px;border-radius:50%;background:#3fc4ee;color:#143a48;font:italic bold 12px/14px 'Liberation Serif';text-align:center">i</div>
<div class="t" style="left:1710px;top:1028px;color:#b0b0b0">6</div>
<div class="a" style="left:1728px;top:1031px;width:14px;height:14px;border-radius:50%;background:#c4c4c4;color:#2b2b2b;font:bold 12px/14px 'Liberation Sans';text-align:center">!</div>
<div class="t" style="left:1745px;top:1028px;color:#b0b0b0">0</div>
<div class="a" style="left:1763px;top:1031px;width:14px;height:14px;border-radius:50%;background:#c4c4c4;color:#2b2b2b;font:bold 13px/14px 'Liberation Sans';text-align:center">×</div>
<div class="t" style="left:1780px;top:1028px;color:#b0b0b0">0</div>
<svg style="left:1809px;top:1031px" width="10" height="14" viewBox="0 0 10 14" fill="#8c8c8c"><path d="M5 0c1 0 1 1 1 1 2 .5 2.500 2.500 2.500 4 0 3 1.500 4 1.500 5.500H0C0 9 1.500 8 1.500 5c0-1.500.5-3.500 2.500-4 0 0 0-1 1-1zM3.500 12h3L5 14z"/></svg>
<div class="t" style="left:1826px;top:1028px;color:#a0a0a0">0</div>
<div class="t" style="left:1840px;top:1028px;color:#b0b0b0">版本 3.6.1</div>
</body></html>
